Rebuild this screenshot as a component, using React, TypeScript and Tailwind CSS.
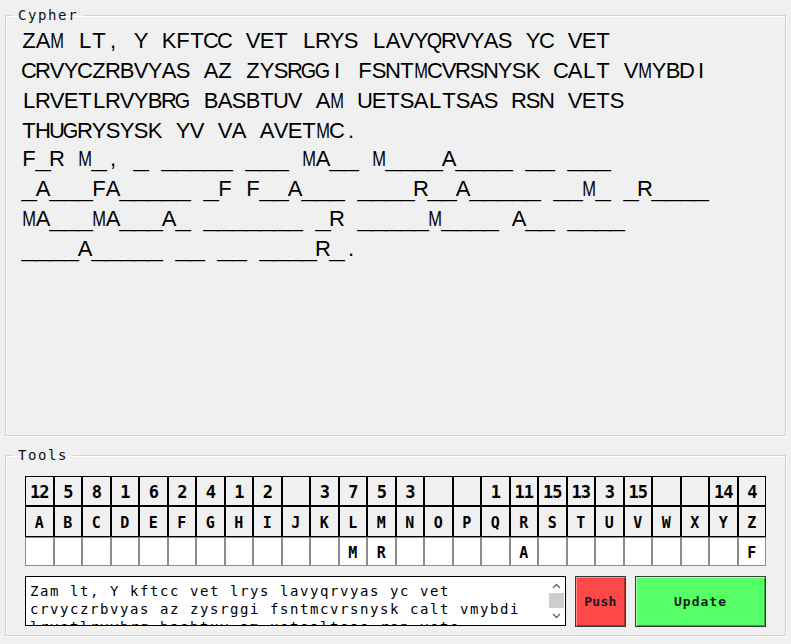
import React from 'react';

const cipherLines = [
  'ZAM LT, Y KFTCC VET LRYS LAVYQRVYAS YC VET',
  'CRVYCZRBVYAS AZ ZYSRGGI FSNTMCVRSNYSK CALT VMYBDI',
  'LRVETLRVYBRG BASBTUV AM UETSALTSAS RSN VETS',
  'THUGRYSYSK YV VA AVETMC.',
];

const plainLines = [
  'F_R M_, _ _____ ___ MA__ M____A____ __ ___',
  '_A___FA_____ _F F__A___ ____R__A_____ __M_ _R____',
  'MA___MA___A_ _______ _R _____M____ A__ ____',
  '____A_____ __ __ ____R_.',
];

const letters = 'ABCDEFGHIJKLMNOPQRSTUVWXYZ'.split('');

const counts: Record<string, string> = {
  A: '12', B: '5', C: '8', D: '1', E: '6', F: '2', G: '4', H: '1', I: '2', J: '',
  K: '3', L: '7', M: '5', N: '3', O: '', P: '', Q: '1', R: '11', S: '15', T: '13',
  U: '3', V: '15', W: '', X: '', Y: '14', Z: '4',
};

// cipher letter -> plain letter guessed so far
const guesses: Record<string, string> = { L: 'M', M: 'R', R: 'A', Z: 'F' };

const plainText =
  'Zam lt, Y kftcc vet lrys lavyqrvyas yc vet\ncrvyczrbvyas az zysrggi fsntmcvrsnysk calt vmybdi\nlrvetlrvybrg basbtuv am uetsaltsas rsn vets\nthugrysysk yv va avetmc.';

function Glyph({ c }: { c: string }) {
  if (c === '_') return <span className="inline-block scale-x-125 translate-y-[1px]">_</span>;
  // the wide letters are squeezed to fit the fixed cell, as in the original
  if (c === 'M' || c === 'W') return <span className="inline-block scale-x-75">{c}</span>;
  if (c === 'Q' || c === 'G' || c === 'O') return <span className="inline-block scale-x-90">{c}</span>;
  return <>{c}</>;
}

function GridLine({ text }: { text: string }) {
  // every character sits in a fixed 14px slot, like the Tk text widget
  return (
    <div className="flex leading-[30px]">
      {[...text].map((c, i) => (
        <span key={i} className="flex w-[14px] shrink-0 justify-center">
          <Glyph c={c} />
        </span>
      ))}
    </div>
  );
}

function Frame({
  title,
  className,
  children,
}: {
  title: string;
  className: string;
  children: React.ReactNode;
}) {
  return (
    <fieldset
      className={`mx-[5px] border border-[#d3d3d3] shadow-[inset_1px_1px_0_#ffffff,1px_1px_0_#ffffff] ${className}`}
    >
      <legend className="ml-[7px] px-[5px] font-['DejaVu_Sans_Mono',monospace] text-[14px] leading-[16px] tracking-[1.6px] text-[#111]">
        {title}
      </legend>
      {children}
    </fieldset>
  );
}

function Chevron({ up }: { up?: boolean }) {
  return (
    <svg width="9" height="6" viewBox="0 0 9 6" className="block">
      <path
        d={up ? 'M1 5 L4.5 1.5 L8 5' : 'M1 1 L4.5 4.5 L8 1'}
        fill="none"
        stroke="#606060"
        strokeWidth="1.3"
      />
    </svg>
  );
}

export default function App() {
  return (
    <div className="h-[644px] w-[791px] overflow-hidden bg-[#f0f0f0] pt-[7px]">
      <Frame title="Cypher" className="h-[429px]">
        <div className="pl-[16px] pt-[3px] font-['Liberation_Sans',Arial,sans-serif] text-[22px] text-black">
          {cipherLines.map((l, i) => (
            <GridLine key={i} text={l} />
          ))}
          <div className="-mt-[2px]">
            {plainLines.map((l, i) => (
              <GridLine key={i} text={l} />
            ))}
          </div>
        </div>
      </Frame>

      <Frame title="Tools" className="mt-[11px] h-[189px]">
        <div className="pl-[19px] pt-[13px]">
          {/* Letter frequency / key table */}
          <div className="grid w-[741px] grid-cols-[repeat(26,minmax(0,1fr))] font-['DejaVu_Sans_Mono',monospace] font-bold text-black">
            {letters.map((l) => (
              <div
                key={'n' + l}
                className="flex h-[30px] items-center justify-center border border-black pt-[3px] text-[17px] tracking-[-1px]"
              >
                {counts[l]}
              </div>
            ))}
            {letters.map((l) => (
              <div
                key={'l' + l}
                className="flex h-[31px] items-center justify-center border border-black pt-[3px] text-[15px]"
              >
                {l}
              </div>
            ))}
            {letters.map((l) => (
              <div
                key={'g' + l}
                className="flex h-[29px] items-center justify-center border border-[#8c8c8c] bg-white pt-[3px] text-[15px]"
              >
                {guesses[l] ?? ''}
              </div>
            ))}
          </div>

          <div className="mt-[10px] flex gap-[9px]">
            <div className="flex h-[50px] w-[541px] border border-black bg-white">
              <div className="flex-1 overflow-hidden whitespace-pre pl-[4px] pt-[5px] font-['DejaVu_Sans_Mono',monospace] text-[14px] leading-[18px] tracking-[1.57px] text-black">
                {plainText}
              </div>
              <div className="mr-[1px] flex w-[15px] flex-col items-center bg-white pt-[6px]">
                <Chevron up />
                <div className="mt-[4px] h-[15px] w-[15px] bg-[#cdcdcd]" />
                <div className="mt-[5px]">
                  <Chevron />
                </div>
              </div>
            </div>
            <button className="h-[51px] w-[51px] border border-[#3a3a3a] bg-[#ff4848] font-['DejaVu_Sans_Mono',monospace] text-[13px] font-bold tracking-[0.3px] text-[#1a1a1a] shadow-[inset_1px_1px_0_#ff8a8a,inset_-1px_-1px_0_#b02a2a]">
              Push
            </button>
            <button className="h-[51px] w-[131px] border border-[#3a3a3a] bg-[#55ff66] font-['DejaVu_Sans_Mono',monospace] text-[13px] font-bold tracking-[1px] text-[#1a1a1a] shadow-[inset_1px_1px_0_#a8ffb0,inset_-1px_-1px_0_#2fb03a]">
              Update
            </button>
          </div>
        </div>
      </Frame>
    </div>
  );
}
